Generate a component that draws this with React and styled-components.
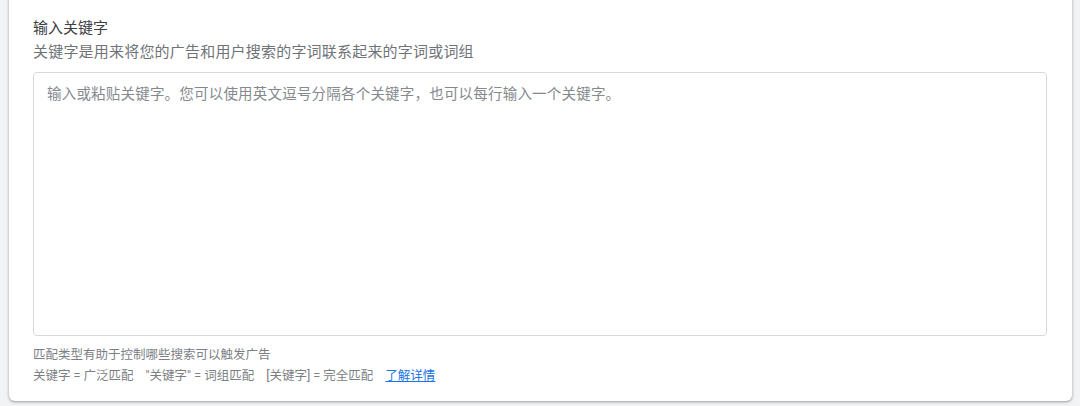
import React from 'react';
import styled, { createGlobalStyle } from 'styled-components';

const GlobalStyle = createGlobalStyle`
    html, body {
        margin: 0;
        padding: 0;
        background: #f1f3f4;
        font-family: Roboto, "Noto Sans CJK SC", "Noto Sans", sans-serif;
    }
    * {
        box-sizing: border-box;
    }
`;

const Page = styled.div`
    min-height: 406px;
    padding: 0 8px 0 9px;
    overflow: hidden;
`;

const Card = styled.section`
    margin-top: -8px;
    padding: 26px 25px 14px 24px;
    background: #fff;
    border-radius: 0 0 6px 6px;
    box-shadow: 0 1px 2px rgba(60, 64, 67, 0.3), 0 1px 3px 1px rgba(60, 64, 67, 0.15);
`;

const Title = styled.div`
    font-size: 15px;
    line-height: 21px;
    color: #3c4043;
    margin-bottom: 2px;
`;

const Subtitle = styled.div`
    font-size: 15px;
    line-height: 22px;
    letter-spacing: 0.2px;
    color: #6f7378;
`;

const KeywordInput = styled.textarea`
    display: block;
    width: 100%;
    height: 264px;
    margin-top: 9px;
    padding: 11px 13px;
    border: 1px solid #d6d8db;
    border-radius: 4px;
    resize: none;
    outline: none;
    font-family: inherit;
    font-size: 14.5px;
    line-height: 22px;
    letter-spacing: 0.2px;
    color: #3c4043;
    background: #fff;

    &::placeholder {
        color: #85898e;
    }
`;

const Footer = styled.div`
    margin-top: 8px;
    font-size: 12.5px;
    color: #7c8085;
`;

const HelpLine = styled.div`
    line-height: 21px;
`;

const MatchLine = styled.div`
    display: flex;
    gap: 12px;
    line-height: 22px;
`;

const LearnMore = styled.a`
    color: #1a73e8;
    text-decoration: underline;
    cursor: pointer;
`;

const matchTypes = [
    '关键字 = 广泛匹配',
    '"关键字" = 词组匹配',
    '[关键字] = 完全匹配',
];

export default function App() {
    return (
        <>
            <GlobalStyle />
            <Page>
                <Card>
                    <Title>输入关键字</Title>
                    <Subtitle>关键字是用来将您的广告和用户搜索的字词联系起来的字词或词组</Subtitle>
                    <KeywordInput placeholder="输入或粘贴关键字。您可以使用英文逗号分隔各个关键字，也可以每行输入一个关键字。" />
                    <Footer>
                        <HelpLine>匹配类型有助于控制哪些搜索可以触发广告</HelpLine>
                        <MatchLine>
                            {matchTypes.map((t) => (
                                <span key={t}>{t}</span>
                            ))}
                            <LearnMore>了解详情</LearnMore>
                        </MatchLine>
                    </Footer>
                </Card>
            </Page>
        </>
    );
}
